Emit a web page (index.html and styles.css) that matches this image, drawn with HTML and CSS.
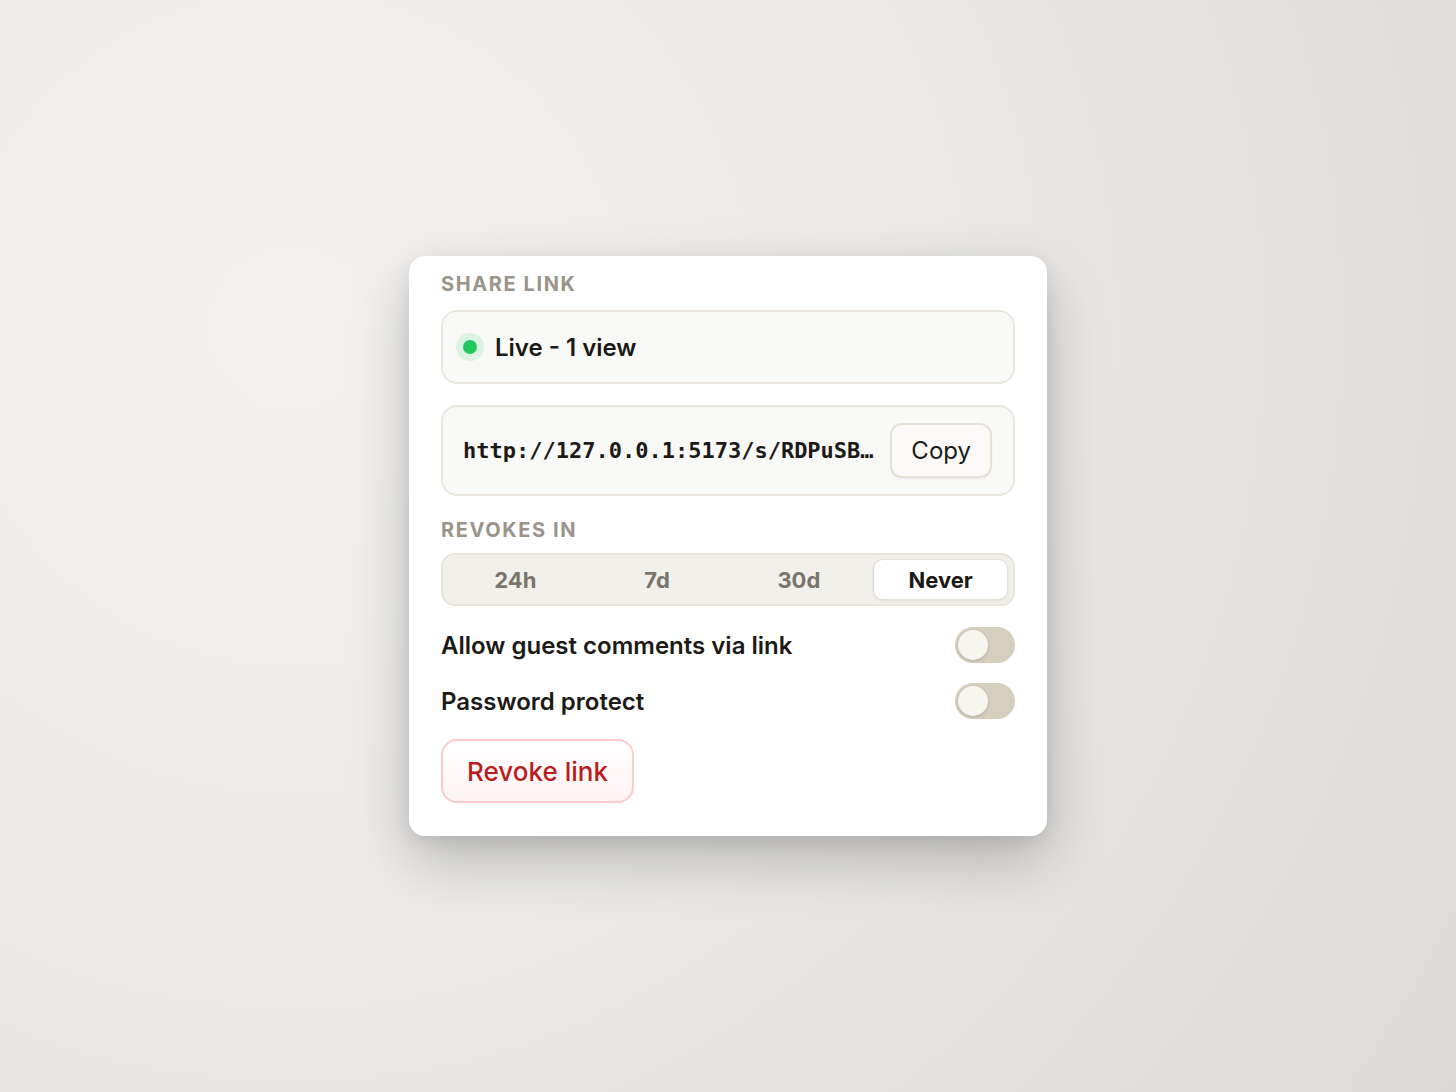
FILE: index.html
```html
<!DOCTYPE html>
<html>
<head>
  <title>Share link</title>
  <link rel="stylesheet" href="styles.css">
</head>
<body>
  <div class="share-card">
    <div class="section-label">Share link</div>

    <div class="status-box">
      <span class="live-dot"></span>
      <span class="status-text">Live - 1 view</span>
    </div>

    <div class="url-box">
      <span class="url-text" title="http://127.0.0.1:5173/s/RDPuSBk2xq9LmTzW">http://127.0.0.1:5173/s/RDPuSBk2xq9LmTzW</span>
      <button class="copy-btn">Copy</button>
    </div>

    <div class="section-label revokes">Revokes in</div>
    <div class="segmented">
      <button class="seg">24h</button>
      <button class="seg">7d</button>
      <button class="seg">30d</button>
      <button class="seg active">Never</button>
    </div>

    <div class="option-row">
      <span>Allow guest comments via link</span>
      <span class="toggle"><span class="knob"></span></span>
    </div>
    <div class="option-row">
      <span>Password protect</span>
      <span class="toggle"><span class="knob"></span></span>
    </div>

    <button class="revoke-btn">Revoke link</button>
  </div>
</body>
</html>
```

FILE: styles.css
```css
body {
  margin: 0;
  height: 100vh;
  display: flex;
  justify-content: center;
  align-items: center;
  font-family: 'Inter', 'Noto Sans', sans-serif;
  color: #1c1a17;
  background: radial-gradient(circle at 20% 30%, #f3f2f1 0%, #ebeae8 45%, #dcd9d6 100%);
}

.share-card {
  width: 638px;
  box-sizing: border-box;
  padding: 16px 32px 33px;
  background: #fff;
  border-radius: 16px;
  box-shadow: 0 24px 60px rgba(0, 0, 0, 0.22), 0 6px 18px rgba(0, 0, 0, 0.08);
}

.section-label {
  font-size: 20px;
  font-weight: 700;
  letter-spacing: 0.08em;
  text-transform: uppercase;
  color: #9a948a;
  line-height: 24px;
  margin-bottom: 14px;
}

.section-label.revokes {
  margin-top: 22px;
  margin-bottom: 11px;
}

.status-box {
  height: 74px;
  box-sizing: border-box;
  display: flex;
  align-items: center;
  gap: 18px;
  padding: 0 20px;
  background: #f9f9f7;
  border: 2px solid #ebe7de;
  border-radius: 16px;
}

.live-dot {
  width: 14px;
  height: 14px;
  border-radius: 50%;
  background: #22c55e;
  box-shadow: 0 0 0 7px #dcf2e3;
}

.status-text {
  font-size: 24px;
  font-weight: 600;
}

.url-box {
  margin-top: 21px;
  display: flex;
  align-items: center;
  gap: 12px;
  padding: 16px 21px 16px 20px;
  background: #f9f9f7;
  border: 2px solid #ebe7de;
  border-radius: 16px;
}

.url-text {
  flex: 1;
  min-width: 0;
  font-family: 'DejaVu Sans Mono', monospace;
  font-weight: 700;
  font-size: 22px;
  white-space: nowrap;
  overflow: hidden;
  text-overflow: ellipsis;
}

.copy-btn {
  height: 55px;
  padding: 0 19px;
  font-family: 'Inter', sans-serif;
  font-size: 24px;
  color: #1c1a17;
  background: #fbfaf8;
  border: 2px solid #e6e1d7;
  border-radius: 12px;
  box-shadow: 0 1px 2px rgba(0, 0, 0, 0.06);
}

.segmented {
  display: grid;
  grid-template-columns: repeat(4, 1fr);
  gap: 7px;
  padding: 4px 5px;
  height: 53px;
  box-sizing: border-box;
  background: #f2f0eb;
  border: 2px solid #e8e4db;
  border-radius: 14px;
}

.seg {
  font-family: 'Inter', sans-serif;
  font-size: 22px;
  font-weight: 700;
  color: #7a746b;
  background: none;
  border: 1.5px solid transparent;
  border-radius: 10px;
}

.seg.active {
  color: #1c1a17;
  background: #fff;
  border-color: #e4dfd5;
  box-shadow: 0 1px 3px rgba(0, 0, 0, 0.08);
}

.option-row {
  margin-top: 21px;
  display: flex;
  justify-content: space-between;
  align-items: center;
  font-size: 24px;
  font-weight: 600;
}

.option-row + .option-row {
  margin-top: 20px;
}

.toggle {
  width: 60px;
  height: 36px;
  box-sizing: border-box;
  padding: 3px;
  border-radius: 18px;
  background: #d6cfc0;
}

.knob {
  display: block;
  width: 30px;
  height: 30px;
  border-radius: 50%;
  background: #f7f5f0;
  box-shadow: 0 1px 3px rgba(0, 0, 0, 0.18);
}

.revoke-btn {
  margin-top: 20px;
  width: 193px;
  height: 64px;
  font-family: 'Inter', sans-serif;
  font-size: 26px;
  font-weight: 500;
  color: #b91c1c;
  background: linear-gradient(#fff, #fff3f3);
  border: 2px solid #fecaca;
  border-radius: 16px;
}
```
